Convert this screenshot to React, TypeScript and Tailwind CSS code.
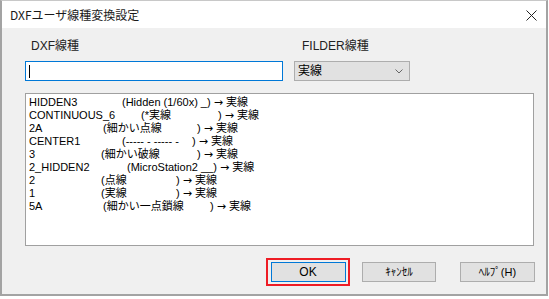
import React from 'react';

type Row = { name: string; w1: number; body: string; w2?: number };

// 列位置は元画像のピクセルに合わせた固定幅
const rows: Row[] = [
  { name: 'HIDDEN3', w1: 93, body: '(Hidden (1/60x) _' },
  { name: 'CONTINUOUS_6', w1: 112, body: '(*実線', w2: 77 },
  { name: '2A', w1: 74, body: '(細かい点線', w2: 94 },
  { name: 'CENTER1', w1: 93, body: '(----- - ----- - ', w2: 70 },
  { name: '3', w1: 72, body: '(細かい破線', w2: 96 },
  { name: '2_HIDDEN2', w1: 98, body: '(MicroStation2 __' },
  { name: '2', w1: 72, body: '(点線', w2: 75 },
  { name: '1', w1: 72, body: '(実線', w2: 75 },
  { name: '5A', w1: 74, body: '(細かい一点鎖線', w2: 107 },
];

const uiFont = "font-['Liberation_Sans','Noto_Sans_CJK_JP',sans-serif]";

const App: React.FC = () => {
  return (
    <div className="w-[549px] h-[299px] bg-white">
      <div className={`w-[548px] h-[296px] flex flex-col border-t border-t-[#c8c8c8] border-x-2 border-b-2 border-[#a3a3a3] ${uiFont} text-black`}>
        {/* タイトルバー */}
        <div className="h-[27px] bg-white flex items-center justify-between pl-[8px] pr-[9px] shrink-0">
          <span className="text-[12px] font-['Noto_Sans_CJK_JP',sans-serif] text-[#1a1a1a]">DXFユーザ線種変換設定</span>
          <svg width="11" height="11" viewBox="0 0 11 11" className="mt-[1px]">
            <path d="M0.5 0.5 L10.5 10.5 M10.5 0.5 L0.5 10.5" stroke="#222" strokeWidth="1" fill="none" />
          </svg>
        </div>

        {/* 本体 */}
        <div className="flex-1 bg-[#f0f0f0] pl-[23px] pr-[11px] flex flex-col">
          <div className="flex mt-[11px] h-[14px] items-center text-[12px] text-[#222]">
            <span className="ml-[6px] w-[271px]">DXF線種</span>
            <span>FILDER線種</span>
          </div>

          <div className="flex mt-[8px] h-[20px]">
            <div className="w-[258px] h-[20px] bg-white border border-[#0078d7] flex items-center pl-[3px]">
              <span className="w-px h-[13px] bg-black" />
            </div>
            <div className="ml-[11px] w-[116px] h-[20px] bg-[#e1e1e1] border border-[#adadad] flex items-center justify-between pl-[3px] pr-[6px] text-[12px]">
              <span>実線</span>
              <svg width="8" height="5" viewBox="0 0 8 5">
                <path d="M0.5 0.5 L4 4 L7.5 0.5" stroke="#666" strokeWidth="1" fill="none" />
              </svg>
            </div>
          </div>

          <div className="mt-[12px] w-[509px] h-[153px] bg-white border border-[#a0a0a0] pl-[3px] pt-[2px] text-[11px] leading-[13px]">
            {rows.map((r) => (
              <div key={r.name} className="flex items-center whitespace-pre h-[13px]">
                <span style={{ width: r.w1 }} className="shrink-0">{r.name}</span>
                <span style={r.w2 ? { width: r.w2 } : undefined} className="shrink-0">{r.body}</span>
                <span className="shrink-0">) </span>
                <span className="shrink-0 font-['DejaVu_Sans',sans-serif]">→</span>
                <span className="shrink-0 ml-[3px]">実線</span>
              </div>
            ))}
          </div>

          <div className="flex justify-end items-center mt-[12px] text-[12px]">
            <div className="w-[84px] h-[28px] border-2 border-[#ee1c25] flex items-center justify-center bg-[#f0f0f0]">
              <button className="w-[75px] h-[20px] bg-[#e1e1e1] border border-[#0078d7] flex items-center justify-center">
                OK
              </button>
            </div>
            <button className="ml-[12px] w-[74px] h-[20px] bg-[#e1e1e1] border border-[#adadad] flex items-center justify-center text-[11px]">
              ｷｬﾝｾﾙ
            </button>
            <button className="ml-[24px] w-[75px] h-[20px] bg-[#e1e1e1] border border-[#adadad] flex items-center justify-center text-[11px]">
              ﾍﾙﾌﾟ(H)
            </button>
          </div>
        </div>
      </div>
    </div>
  );
};

export default App;
